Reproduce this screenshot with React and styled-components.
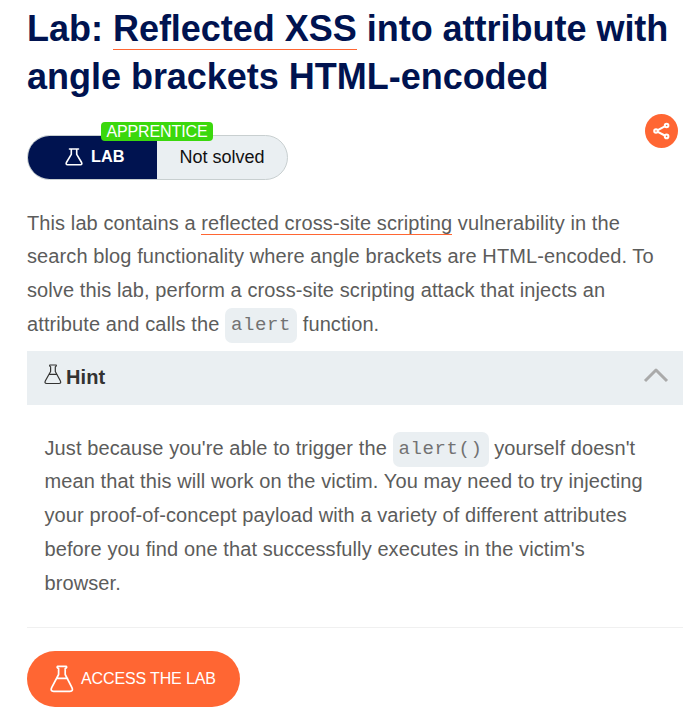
import React from "react";
import styled, { createGlobalStyle } from "styled-components";

const GlobalStyle = createGlobalStyle`
  * { box-sizing: border-box; }
  body {
    margin: 0;
    background: #fff;
    color: #5c5c5b;
    font-family: "Liberation Sans", Arial, sans-serif;
  }
`;

const Page = styled.main`
  display: flex;
  flex-direction: column;
  align-items: flex-start;
  width: 693px;
  height: 718px;
  padding: 5px 10px 0 27px;
  overflow: hidden;
`;

const Title = styled.h1`
  margin: 0;
  color: #001350;
  font-size: 36px;
  letter-spacing: -0.02px;
  line-height: 48px;
  font-weight: 700;
  white-space: nowrap;
`;

const TitleLink = styled.a`
  border-bottom: 1px solid #ff6633;
`;

const StatusRow = styled.div`
  display: flex;
  align-items: flex-start;
  justify-content: space-between;
  width: 100%;
  height: 66px;
  margin-top: 13px;
  padding-right: 5px;
`;

const Status = styled.div`
  position: relative;
  display: flex;
  width: 261px;
  height: 45px;
  margin-top: 21px;
  border: 1px solid #c8cfd0;
  border-radius: 23px;
  background: #eaeff2;
`;

const StatusType = styled.div`
  display: flex;
  align-items: center;
  gap: 8px;
  width: 129px;
  padding: 0 0 2px 37px;
  border-radius: 22px 0 0 22px;
  background: #001350;
  color: #fff;
  font-size: 16.3px;
  font-weight: 700;
`;

const StatusText = styled.div`
  display: flex;
  flex: 1;
  align-items: center;
  justify-content: center;
  color: #111;
  font-size: 18px;
`;

const Level = styled.span`
  position: absolute;
  top: -14px;
  left: 73px;
  width: 112px;
  height: 19px;
  border-radius: 4px;
  background: #3bd80d;
  color: #fff;
  font-size: 16px;
  letter-spacing: -0.1px;
  line-height: 19px;
  text-align: center;
`;

const ShareButton = styled.button`
  width: 33px;
  height: 34px;
  padding: 0;
  border: 0;
  border-radius: 50%;
  background: #ff6633;
  line-height: 0;
`;

const Copy = styled.p`
  margin: ${(p) => p.$margin};
  font-size: 20px;
  letter-spacing: 0.1px;
  line-height: 33.75px;
  white-space: nowrap;
`;

const TextLink = styled.a`
  border-bottom: 1px solid #ff6633;
`;

const Code = styled.code`
  padding: 6px 6px 7px;
  border-radius: 7px;
  background: #eaeff2;
  color: #727272;
  font-family: "Liberation Mono", "Courier New", monospace;
  font-size: 19px;
  letter-spacing: 0.6px;
  line-height: 20px;
  vertical-align: 1px;
`;

const HintBar = styled.div`
  display: flex;
  align-items: center;
  width: 100%;
  height: 54px;
  padding: 0 14px 3px 17px;
  background: #eaeff2;
  color: #333332;
`;

const HintLabel = styled.strong`
  flex: 1;
  padding: 2px 0 0 4px;
  font-size: 20px;
  letter-spacing: 0.1px;
`;

const Divider = styled.hr`
  width: 100%;
  height: 1px;
  margin: 26.5px 0 23px;
  border: 0;
  background: #f0f0f0;
`;

const AccessButton = styled.button`
  display: flex;
  align-items: center;
  gap: 7px;
  width: 213px;
  height: 56px;
  padding: 0 0 0 23px;
  border: 0;
  border-radius: 28px;
  background: #ff6633;
  color: #fff;
  font: 16px "Liberation Sans", Arial, sans-serif;
  letter-spacing: -0.13px;
  white-space: nowrap;
`;

const Icon = styled.svg`
  display: block;
  flex: none;
  fill: none;
  stroke: currentColor;
  stroke-linejoin: round;
  stroke-linecap: round;
`;

const HintFlask = styled(Icon)`
  margin-bottom: 4px;
`;

const Chevron = styled(Icon)`
  margin-bottom: 3px;
  color: #aaa;
`;

export default function App() {
  return (
    <>
      <GlobalStyle />
      <Page>
        <Title>
          Lab: <TitleLink>Reflected XSS</TitleLink> into attribute with
          <br />
          angle brackets HTML-encoded
        </Title>
        <StatusRow>
          <Status>
            <StatusType>
              <Icon width="18" height="18" viewBox="0 0 18 18" strokeWidth="1.6">
                <path d="M4.5 1h9M6.3 1.3v5L1.4 14.5q-.9 2.2 1.2 2.2h12.8q2.1 0 1.2-2.2l-4.9-8.2v-5" />
              </Icon>
              LAB
            </StatusType>
            <StatusText>Not solved</StatusText>
            <Level>APPRENTICE</Level>
          </Status>
          <ShareButton aria-label="Share">
            <svg width="33" height="34" viewBox="0 0 33 34" fill="none" stroke="#fff" strokeWidth="2">
              <path d="m12.8 16.2 7-3.8M12.8 17.8l7 3.7" />
              <circle cx="11" cy="17" r="1.8" />
              <circle cx="21.6" cy="11.5" r="1.8" />
              <circle cx="21.6" cy="22.4" r="1.8" />
            </svg>
          </ShareButton>
        </StatusRow>
        <Copy $margin="26.5px 0 9.5px">
          This lab contains a <TextLink>reflected cross-site scripting</TextLink> vulnerability in the
          <br />
          search blog functionality where angle brackets are HTML-encoded. To
          <br />
          solve this lab, perform a cross-site scripting attack that injects an
          <br />
          attribute and calls the <Code>alert</Code> function.
        </Copy>
        <HintBar>
          <HintFlask width="18" height="21" viewBox="0 0 18 21" strokeWidth="1.2">
            <path d="M5.8 1h6.4q.6 1.3-.9 1.8v4.7l5 9.2q1.3 2.8-1.3 2.8H2.7q-2.6 0-1.3-2.8l5.2-9.2V2.8Q5.2 2.3 5.8 1ZM5 10.3h8" />
          </HintFlask>
          <HintLabel>Hint</HintLabel>
          <Chevron width="26" height="16" viewBox="0 0 26 16" strokeWidth="3">
            <path d="M2 14 13 3 24 14" strokeLinecap="butt" />
          </Chevron>
        </HintBar>
        <Copy $margin="26.5px 0 0 17.5px">
          Just because you're able to trigger the <Code>alert()</Code> yourself doesn't
          <br />
          mean that this will work on the victim. You may need to try injecting
          <br />
          your proof-of-concept payload with a variety of different attributes
          <br />
          before you find one that successfully executes in the victim's
          <br />
          browser.
        </Copy>
        <Divider />
        <AccessButton>
          <Icon width="24" height="28" viewBox="0 0 24 28" strokeWidth="1.7">
            <path d="M7.4 1.3h9q.8 1.6-1.2 2.3v5.9l6.6 12.9q1.8 3.9-1.8 3.9H3.6q-3.6 0-1.8-3.9L8.6 9.5V3.6Q6.6 2.9 7.4 1.3ZM6.5 13.4h11" />
          </Icon>
          ACCESS THE LAB
        </AccessButton>
      </Page>
    </>
  );
}
